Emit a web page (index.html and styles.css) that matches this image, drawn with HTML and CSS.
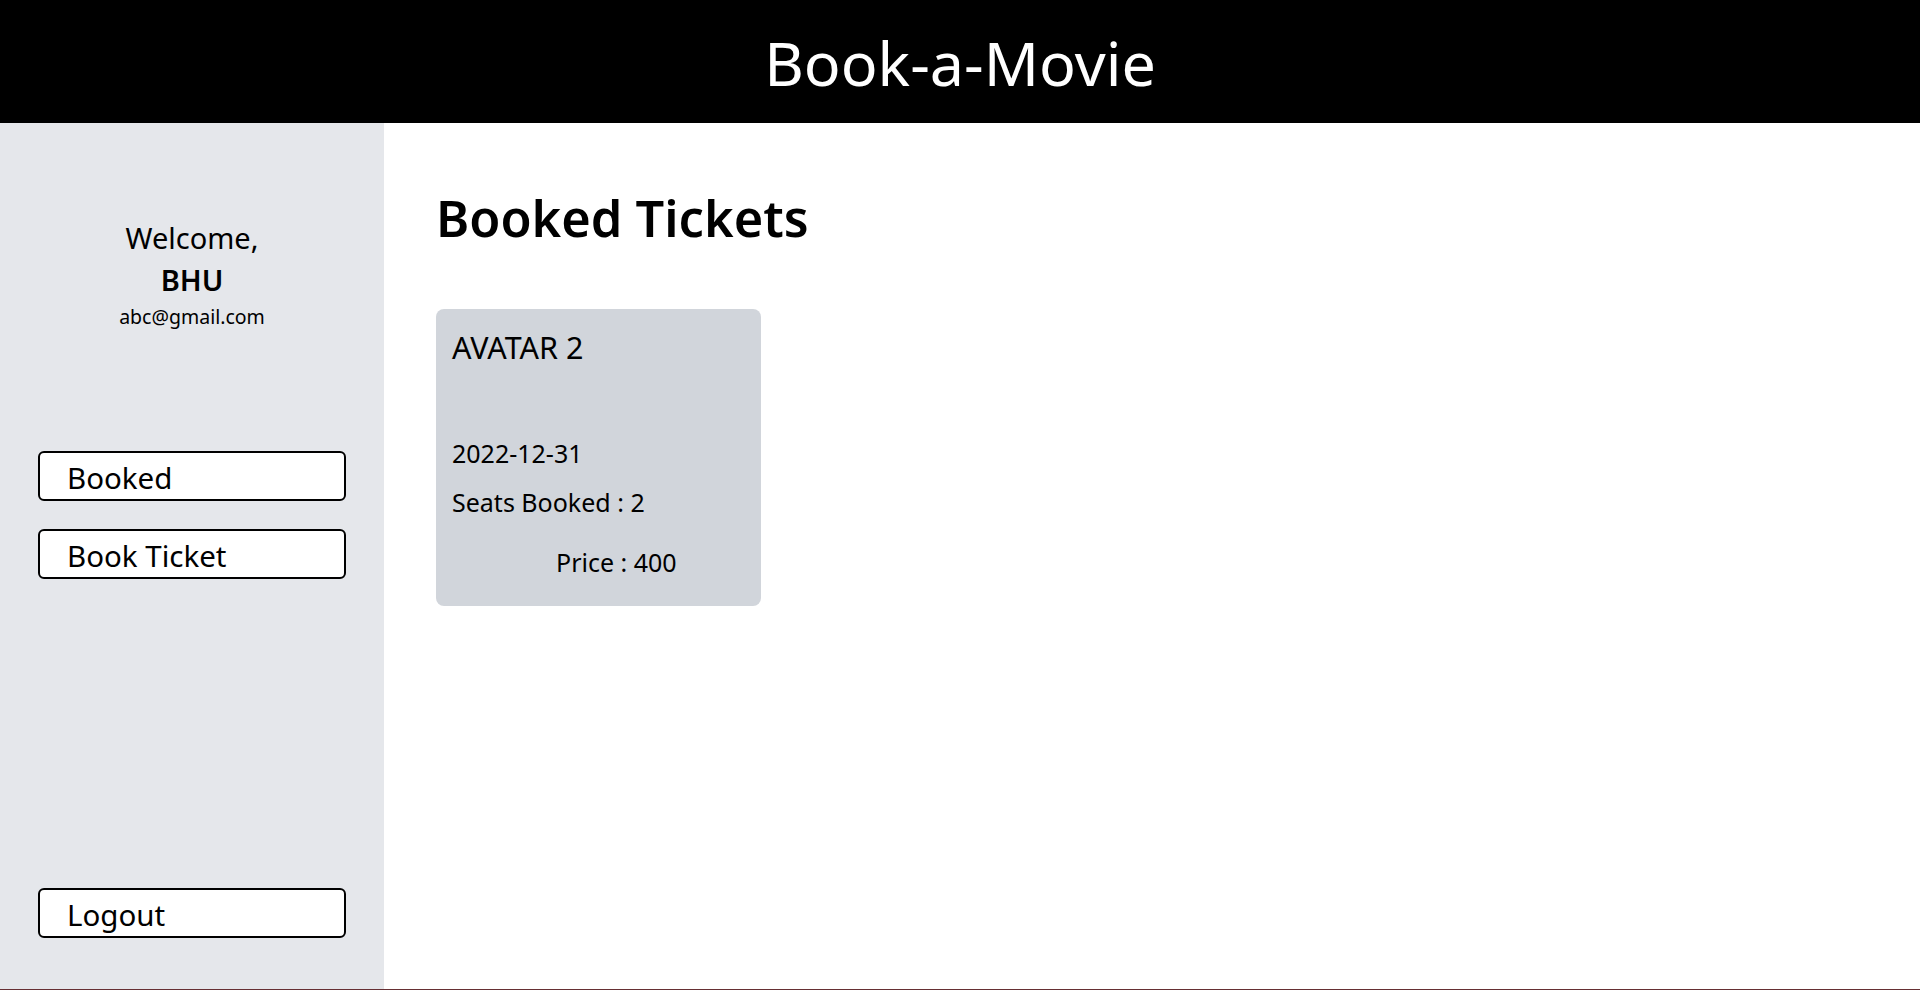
FILE: index.html
```html
<!DOCTYPE html>
<html lang="en">
<head>
<meta charset="utf-8">
<title>Book-a-Movie</title>
<link rel="stylesheet" href="styles.css">
</head>
<body>
<header class="topbar">
  <h1 class="brand">Book-a-Movie</h1>
</header>
<div class="layout">
  <aside class="sidebar">
    <div class="user">
      <div class="welcome">Welcome,</div>
      <div class="username">BHU</div>
      <div class="email">abc@gmail.com</div>
    </div>
    <nav class="nav">
      <button class="nav-btn">Booked</button>
      <button class="nav-btn">Book Ticket</button>
    </nav>
    <div class="logout-wrap">
      <button class="nav-btn">Logout</button>
    </div>
  </aside>
  <main class="content">
    <h2 class="page-title">Booked Tickets</h2>
    <div class="tickets">
      <div class="ticket">
        <div class="movie">AVATAR 2</div>
        <div class="date">2022-12-31</div>
        <div class="seats">Seats Booked : 2</div>
        <div class="price">Price : 400</div>
      </div>
    </div>
  </main>
</div>
</body>
</html>
```

FILE: styles.css
```css
* { box-sizing: border-box; }
html, body { margin: 0; padding: 0; }
body {
  font-family: "Noto Sans", "Open Sans", sans-serif;
  color: #000;
  background: #fff;
  height: 990px;
  overflow: hidden;
}
.topbar {
  height: 123px;
  background: #000;
  display: flex;
  align-items: center;
  justify-content: center;
}
.brand {
  margin: 0;
  color: #fff;
  font-weight: 400;
  font-size: 61px;
  line-height: 1;
  padding-top: 2px;
}
.layout {
  display: flex;
  height: 867px;
  border-bottom: 1px solid #662f33;
}
.sidebar {
  width: 384px;
  flex: none;
  background: #e5e7eb;
  display: flex;
  flex-direction: column;
  padding: 0 38px 51px 38px;
}
.user {
  text-align: center;
  padding-top: 97px;
}
.welcome {
  font-size: 29px;
  line-height: 36px;
}
.username {
  font-size: 29px;
  line-height: 36px;
  font-weight: 600;
  margin-top: 6px;
}
.email {
  font-size: 19.5px;
  line-height: 28px;
  margin-top: 5px;
}
.nav {
  display: flex;
  flex-direction: column;
  gap: 28px;
  margin-top: 120px;
}
.nav-btn {
  font-family: inherit;
  display: block;
  width: 100%;
  height: 50px;
  background: #fff;
  border: 2px solid #000;
  border-radius: 6px;
  text-align: left;
  padding: 3px 0 0 27px;
  font-size: 29.5px;
  color: #000;
  line-height: 1;
}
.logout-wrap {
  margin-top: auto;
}
.content {
  flex: 1;
  padding: 0 0 0 52px;
}
.page-title {
  margin: 0;
  padding-top: 63px;
  font-size: 50.5px;
  line-height: 64px;
  font-weight: 600;
}
.tickets {
  display: flex;
  gap: 24px;
  margin-top: 59px;
}
.ticket {
  width: 325px;
  height: 297px;
  background: #d1d5db;
  border-radius: 8px;
  padding: 18px 16px 16px;
}
.movie {
  font-size: 30.5px;
  line-height: 40px;
}
.date {
  font-size: 25px;
  line-height: 32px;
  margin-top: 70px;
}
.seats {
  font-size: 25px;
  line-height: 32px;
  margin-top: 17px;
}
.price {
  font-size: 25px;
  line-height: 32px;
  margin-top: 28px;
  padding-left: 104px;
}
```
